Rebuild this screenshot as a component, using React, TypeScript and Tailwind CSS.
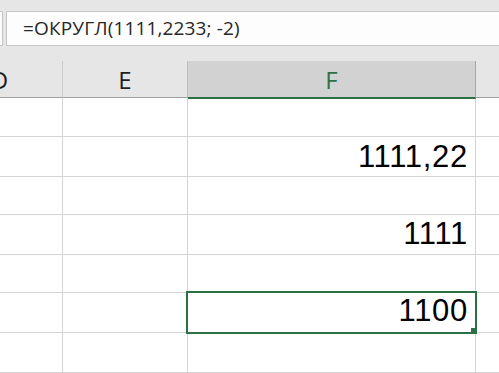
export default function App() {
  const rows = [
    { h: 'h-[39px]', val: '', pb: 'pb-[4px]' },
    { h: 'h-[40px]', val: '1111,22', pb: 'pb-[4px]' },
    { h: 'h-[38px]', val: '', pb: 'pb-[4px]' },
    { h: 'h-[40px]', val: '1111', pb: 'pb-[5px]' },
    { h: 'h-[38px]', val: '', pb: 'pb-[4px]' },
    { h: 'h-[40px]', val: '1100', pb: 'pb-[6px]' },
    { h: 'h-[40px]', val: '', pb: 'pb-[4px]' },
  ];
  return (
    <div className="relative w-[499px] h-[373px] overflow-hidden bg-white">
      {/* Formula bar area */}
      <div className="h-[61px] bg-[#e6e6e6] pt-[11px]">
        <div className="flex h-[35px]">
          <div className="w-[3px] border-y border-r border-[#c6c6c6] bg-[#fbfbfb]" />
          <div className="ml-[3px] flex flex-1 items-center border-y border-l border-[#c6c6c6] bg-[#fdfdfd] pl-[16px]">
            <span className="text-[19px] leading-none tracking-[0.15px] text-[#262626] whitespace-nowrap" style={{ fontFamily: '"Open Sans", "Noto Sans", sans-serif' }}>
              =ОКРУГЛ(1111,2233; -2)
            </span>
          </div>
        </div>
      </div>
      {/* Column headers */}
      <div className="flex h-[37px] bg-[#e6e6e6]" style={{ fontFamily: '"Open Sans", "Noto Sans", sans-serif' }}>
        <div className="-ml-[63px] flex w-[126px] shrink-0 items-center justify-center border-r border-b border-r-[#cbcbcb] border-b-[#a0a0a0] pt-[2px] text-[24px] leading-none text-[#1f1f1f]">D</div>
        <div className="flex w-[125px] shrink-0 items-center justify-center border-r border-b border-r-[#bdbdbd] border-b-[#a0a0a0] pt-[2px] text-[24px] leading-none text-[#1f1f1f]">E</div>
        <div className="relative flex h-[38px] w-[288px] shrink-0 items-center justify-center border-r border-b-2 border-r-[#a6a6a6] border-b-[#2e7045] bg-[#d2d2d2] pt-[1px] text-[24px] leading-none text-[#2e7045]">F</div>
        <div className="flex-1 border-b border-b-[#a0a0a0]" />
      </div>
      {/* Grid rows */}
      {rows.map((r, i) => (
        <div key={i} className={`flex ${r.h}`}>
          <div className="-ml-[63px] w-[126px] shrink-0 border-r border-b border-[#d4d4d4]" />
          <div className="w-[125px] shrink-0 border-r border-b border-[#d4d4d4]" />
          <div className={`flex w-[288px] shrink-0 items-end justify-end border-r border-b border-[#d4d4d4] pr-[7px] ${r.pb}`}>
            <span className="text-[31px] leading-none tracking-[0.7px] text-black" style={{ fontFamily: '"Liberation Sans", Arial, sans-serif' }}>{r.val}</span>
          </div>
          <div className="flex-1 border-b border-[#d4d4d4]" />
        </div>
      ))}
      {/* Selection */}
      <div className="absolute left-[186px] top-[291px] h-[43px] w-[291px] border-2 border-[#2e7045]" />
      <div className="absolute left-[471px] top-[328px] h-[6px] w-[6px] bg-[#2e7045]" />
    </div>
  );
}
